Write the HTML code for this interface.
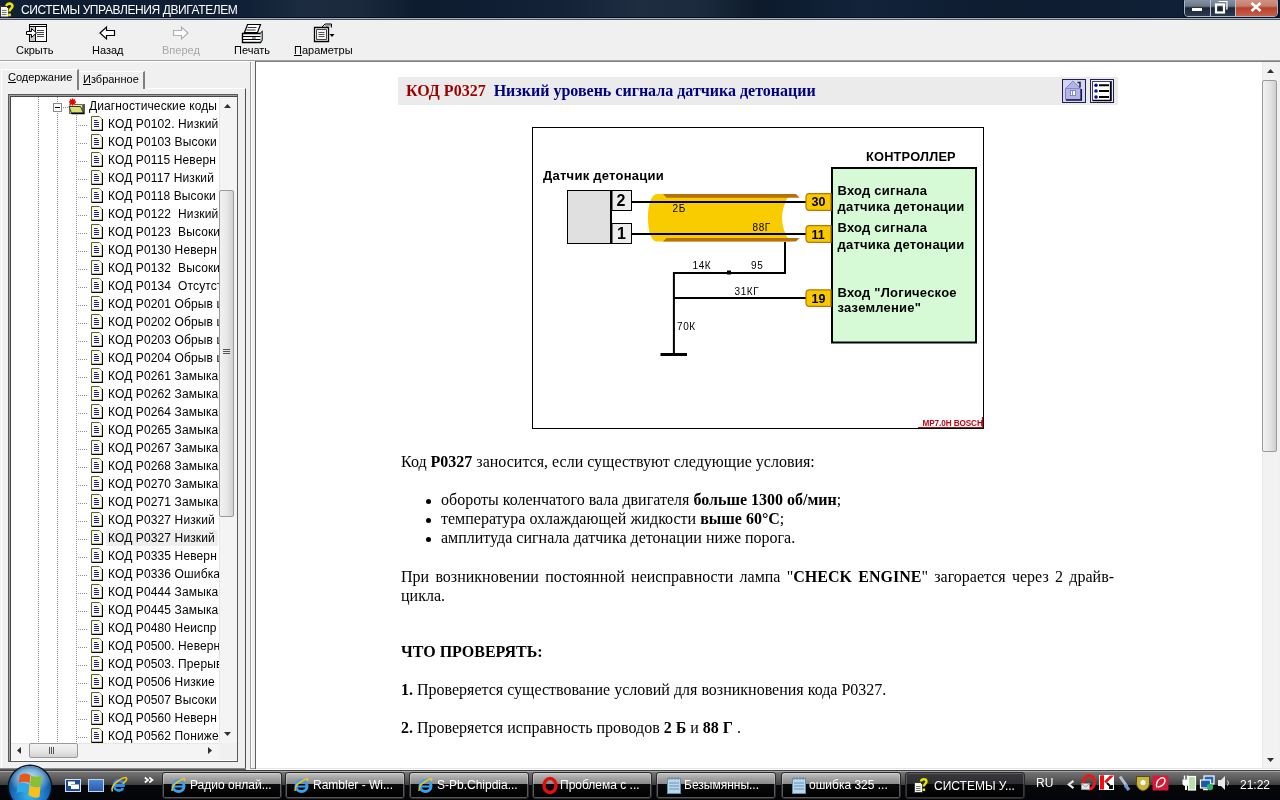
<!DOCTYPE html>
<html><head><meta charset="utf-8">
<style>
*{margin:0;padding:0;box-sizing:border-box}
html,body{width:1280px;height:800px;overflow:hidden;background:#f0f0f0;font-family:"Liberation Sans",sans-serif}
body{will-change:transform}
.a{position:absolute}
svg{position:absolute;overflow:visible}
#title{left:0;top:0;width:1280px;height:17px;background:linear-gradient(90deg,#132238 0px,#0e1c30 60px,#102036 250px,#1c2b3f 300px,#1a293c 360px,#0d1b2f 420px,#132237 560px,#1f2d41 640px,#1c2a3d 700px,#0c1a2c 760px,#12233a 860px,#0e1c30 1000px,#102036 1180px,#0e1c30 1280px)}
#ttext{left:21px;top:2px;color:#fff;font-size:12px;letter-spacing:-0.4px;line-height:17px;white-space:nowrap}
.tb{font-size:11px;color:#000;white-space:nowrap;top:43px;line-height:14px}
.row{position:absolute;left:0;height:18px;width:260px}
.rt{position:absolute;left:108px;top:0;font-size:12px;line-height:18px;white-space:pre;color:#000;letter-spacing:0.12px}
.di{position:absolute;left:91px;top:1px;width:12px;height:15px}
.hd{position:absolute;left:78px;top:10px;width:10px;height:1px;background:repeating-linear-gradient(90deg,#909090 0 1px,transparent 1px 2px)}
.vd{position:absolute;width:1px;background:repeating-linear-gradient(180deg,#909090 0 1px,transparent 1px 2px)}
.body16{font-family:"Liberation Serif",serif;font-size:16px;color:#000;white-space:nowrap;line-height:19px}
.dg{font-family:"Liberation Sans",sans-serif;font-weight:bold;color:#000;white-space:nowrap;position:absolute}
.sm{font-family:"Liberation Sans",sans-serif;color:#000;white-space:nowrap;position:absolute;font-size:10px}
.tbtn{position:absolute;top:772px;width:120px;height:27px;border:1px solid #2a2a2a;border-radius:3px;background:linear-gradient(180deg,#c4c4c4 0px,#a4a4a4 5px,#8a8a8a 11px,#0a0a0a 11.5px,#000 100%);box-shadow:inset 0 0 0 1px rgba(220,220,220,0.4)}
.tbt{position:absolute;left:27px;top:5px;font-size:12px;color:#fff;white-space:nowrap;line-height:15px}
</style></head><body>
<svg width="0" height="0" style="position:absolute">
<defs>
<symbol id="doc" viewBox="0 0 12 15">
<path d="M0.5 0.5H8.5L11.5 3.5V14.5H0.5Z" fill="#fbfbe2"/>
<path d="M0.5 14.5V0.5H8.5" fill="none" stroke="#5a5a44" stroke-width="1"/>
<path d="M8.5 0.5L11.5 3.5" fill="none" stroke="#9a9a80" stroke-width="1"/>
<path d="M11.5 3V14.5H0.5" fill="none" stroke="#000" stroke-width="1.3"/>
<path d="M3 4.5h3.5M3 6.5h5M3 8.5h5M3 10.5h5" stroke="#1a1aa0" stroke-width="1"/>
</symbol>
</defs>
</svg>
<!-- title bar -->
<div class="a" id="title"></div>
<div class="a" style="left:0;top:17px;width:1280px;height:1px;background:#08101c"></div>
<div class="a" style="left:0;top:18px;width:1280px;height:1px;background:#a4acb8"></div>
<div class="a" style="left:0;top:19px;width:1280px;height:1px;background:#4c5462"></div>
<svg style="left:0px;top:1px" width="18" height="17" viewBox="0 0 18 17">
<path d="M0.5 5.5h6l2 2v8.5h-8z" fill="#f4f4ec" stroke="#333" stroke-width="1"/>
<path d="M2 9.5h4.5M2 11.5h4.5M2 13.5h4.5" stroke="#777" stroke-width="1"/>
<path d="M6.5 5c0-3.2 6-3.2 6 0c0 2.6-3 2.4-3 5.5" fill="none" stroke="#e8e400" stroke-width="2.6"/>
<rect x="8.2" y="12.5" width="2.7" height="2.7" fill="#e8e400"/>
</svg>
<div class="a" id="ttext">СИСТЕМЫ УПРАВЛЕНИЯ ДВИГАТЕЛЕМ</div>
<!-- window buttons -->
<div class="a" style="left:1184px;top:-3px;width:94px;height:20px;border:1px solid #aab4c4;border-radius:4px;background:#2a3548;box-shadow:0 0 0 1px #0a1220"></div>
<div class="a" style="left:1185px;top:-2px;width:25px;height:18px;border-radius:3px 0 0 3px;background:linear-gradient(180deg,#8c98a8 0%,#6e7a8c 45%,#1c2638 55%,#2c3a50 100%)"></div>
<div class="a" style="left:1210px;top:-2px;width:1px;height:18px;background:#b8c2d0"></div>
<div class="a" style="left:1211px;top:-2px;width:24px;height:18px;background:linear-gradient(180deg,#8c98a8 0%,#6e7a8c 45%,#1c2638 55%,#2c3a50 100%)"></div>
<div class="a" style="left:1235px;top:-2px;width:1px;height:18px;background:#b8c2d0"></div>
<div class="a" style="left:1236px;top:-2px;width:41px;height:18px;border-radius:0 3px 3px 0;background:linear-gradient(180deg,#d4998c 0%,#c67d6e 45%,#b8402a 55%,#c4604a 100%)"></div>
<div class="a" style="left:1192px;top:8px;width:10px;height:3px;background:#fff;box-shadow:0 0 1px #222"></div>
<svg style="left:1215px;top:1px" width="13" height="12" viewBox="0 0 13 12">
<path d="M3.5 0.5h8.5v8" fill="none" stroke="#fff" stroke-width="1.2"/>
<path d="M11.5 1V8.5" stroke="#c8d0da" stroke-width="1"/>
<rect x="1" y="3.5" width="8" height="8" fill="none" stroke="#fff" stroke-width="2.2"/>
<rect x="3.2" y="5.7" width="3.6" height="3.6" fill="#1c2638"/>
</svg>
<svg style="left:1250px;top:2px" width="12" height="10" viewBox="0 0 12 10">
<path d="M1.5 1L10.5 9M10.5 1L1.5 9" stroke="#fff" stroke-width="2.6"/>
</svg>
<!-- toolbar -->
<svg style="left:26px;top:24px" width="21" height="18" viewBox="0 0 21 18">
<rect x="3.5" y="0.5" width="17" height="17" fill="#fff" stroke="#000"/>
<rect x="4" y="2" width="5" height="15" fill="#c8c8c8"/>
<path d="M3.5 2.5h17M9.5 2.5v15" stroke="#000"/>
<path d="M11 6.5h7M11 8.5h7M11 10.5h7M11 12.5h7" stroke="#444"/>
<path d="M0.5 7.5h5v-3l5 4.5l-5 4.5v-3h-5z" fill="#fff" stroke="#000"/>
</svg>
<svg style="left:99px;top:26px" width="17" height="14" viewBox="0 0 17 14">
<path d="M1 7L7.5 1V4.5H15.5V9.5H7.5V13Z" fill="#fff" stroke="#000" stroke-width="1.2"/>
</svg>
<svg style="left:172px;top:26px" width="17" height="14" viewBox="0 0 17 14">
<path d="M16 7L9.5 1V4.5H1.5V9.5H9.5V13Z" fill="#fff" stroke="#b0b0b0" stroke-width="1.2"/>
</svg>
<svg style="left:241px;top:24px" width="22" height="20" viewBox="0 0 22 20">
<path d="M6.5 0.5H19.5L16.5 8.5H3.5Z" fill="#fff" stroke="#000" stroke-width="1.2"/>
<path d="M6.5 3.5h9M5.5 6h9" stroke="#333" stroke-width="1"/>
<path d="M1.5 9.5H19.5L21 8V16L19.5 18.5H1.5Z" fill="#fff" stroke="#000" stroke-width="1.4"/>
<path d="M1.5 12.5H19.5M1.5 15.5H19.5" stroke="#000" stroke-width="1.2"/>
<path d="M11 14h4" stroke="#555" stroke-width="1.2"/>
<path d="M19.5 9.5L21 8V16L19.5 18.5Z" fill="#9aa"/>
</svg>
<svg style="left:314px;top:23px" width="22" height="20" viewBox="0 0 22 20">
<path d="M7.5 4.5L11 1H17.5V4.5" fill="#ddd" stroke="#000" stroke-width="1"/>
<path d="M11 1.5l2 2l2-2l2 2" fill="none" stroke="#666" stroke-width="1"/>
<path d="M0.5 4.5H14.5V18.5H0.5Z" fill="#fff" stroke="#000" stroke-width="1.3"/>
<path d="M2.5 6.5H12.5V16.5H2.5Z" fill="#f4f4f4" stroke="#444" stroke-width="1"/>
<path d="M4.5 9.5h6M4.5 11.5h6M4.5 13.5h6" stroke="#555" stroke-width="1"/>
<path d="M15.5 11h5l-2.5 3z" fill="#000"/>
</svg>
<div class="a tb" style="left:16px">Скрыть</div>
<div class="a tb" style="left:92px">Назад</div>
<div class="a tb" style="left:162px;color:#a8a8a8">Вперед</div>
<div class="a tb" style="left:234px">Печать</div>
<div class="a tb" style="left:294px"><u>П</u>араметры</div>
<div class="a" style="left:0;top:60px;width:1280px;height:1px;background:#a0a0a0"></div>
<div class="a" style="left:0;top:61px;width:1280px;height:1px;background:#fff"></div>
<div class="a" style="left:246px;top:62px;width:10px;height:708px;background:#f0f0f0"></div>
<div class="a" style="left:250px;top:62px;width:1px;height:706px;background:#a0a0a0"></div>
<div class="a" style="left:251px;top:62px;width:1px;height:706px;background:#fff"></div>
<div class="a" style="left:250px;top:768px;width:6px;height:1px;background:#a0a0a0"></div>
<div class="a" style="left:255px;top:61px;width:1px;height:708px;background:#606060"></div>
<div class="a" style="left:1px;top:88px;width:245px;height:682px;border-left:1px solid #fff;border-top:1px solid #fff;border-right:1px solid #505050;border-bottom:none;background:#f0f0f0"></div>
<div class="a" style="left:0px;top:768px;width:246px;height:1px;background:#8a8a8a"></div>
<div class="a" style="left:0px;top:769px;width:246px;height:1px;background:#5a5a5a"></div>
<div class="a" style="left:78px;top:71px;width:67px;height:18px;border-left:1px solid #fff;border-top:1px solid #fff;border-right:2px solid #808080;background:#f0f0f0"></div>
<div class="a" style="left:83px;top:72px;font-size:11px;line-height:14px;white-space:nowrap"><u>И</u>збранное</div>
<div class="a" style="left:1px;top:69px;width:78px;height:21px;border-left:1px solid #fff;border-top:1px solid #fff;border-right:2px solid #808080;background:#f0f0f0"></div>
<div class="a" style="left:8px;top:70px;font-size:11px;line-height:14px;white-space:nowrap"><u>С</u>одержание</div>
<div class="a" style="left:8px;top:94px;width:230px;height:668px;border:1px solid #5a5a5a;box-shadow:inset 1px 1px 0 #a0a0a0,inset 2px 2px 0 #454545,inset -1px -1px 0 #fff;background:#fff;overflow:hidden">
<div class="a" style="left:-9px;top:-95px;width:260px;height:800px">
<div class="vd" style="left:38px;top:97px;height:646px"></div>
<div class="vd" style="left:57px;top:97px;height:6px"></div>
<div class="vd" style="left:57px;top:113px;height:630px"></div>
<div class="vd" style="left:76px;top:115px;height:628px"></div>
<div class="a" style="left:53px;top:103px;width:9px;height:9px;border:1px solid #8a8a8a;background:#fff"></div>
<div class="a" style="left:55px;top:107px;width:5px;height:1px;background:#000"></div>
<div class="a" style="left:63px;top:107px;width:5px;height:1px;background:repeating-linear-gradient(90deg,#909090 0 1px,transparent 1px 2px)"></div>
<svg style="left:68px;top:98px" width="17" height="16" viewBox="0 0 17 16">
<path d="M2 5.5h4l1 1h7.5v9h-13z" fill="#f0e8b0" stroke="#6a6a40"/>
<path d="M1 8.5h11.5l3 6.5h-12z" fill="#d8e070" stroke="#333"/>
<path d="M3.5 15.5h12.5V6" fill="none" stroke="#000" stroke-width="1.3"/>
<path d="M4.5 0.5L4.5 7.5M1 4h7M2 1.5l5 5M7 1.5l-5 5" stroke="#e00000" stroke-width="1.6"/>
</svg>
<div class="rt" style="left:89px;top:97px">Диагностические коды</div>
<div class="row" style="top:115px">
<div class="hd"></div>
<svg class="di" viewBox="0 0 12 15"><use href="#doc"/></svg>
<div class="rt">КОД P0102. Низкий</div>
</div>
<div class="row" style="top:133px">
<div class="hd"></div>
<svg class="di" viewBox="0 0 12 15"><use href="#doc"/></svg>
<div class="rt">КОД P0103 Высоки</div>
</div>
<div class="row" style="top:151px">
<div class="hd"></div>
<svg class="di" viewBox="0 0 12 15"><use href="#doc"/></svg>
<div class="rt">КОД P0115 Неверн</div>
</div>
<div class="row" style="top:169px">
<div class="hd"></div>
<svg class="di" viewBox="0 0 12 15"><use href="#doc"/></svg>
<div class="rt">КОД P0117 Низкий</div>
</div>
<div class="row" style="top:187px">
<div class="hd"></div>
<svg class="di" viewBox="0 0 12 15"><use href="#doc"/></svg>
<div class="rt">КОД P0118 Высоки</div>
</div>
<div class="row" style="top:205px">
<div class="hd"></div>
<svg class="di" viewBox="0 0 12 15"><use href="#doc"/></svg>
<div class="rt">КОД P0122  Низкий</div>
</div>
<div class="row" style="top:223px">
<div class="hd"></div>
<svg class="di" viewBox="0 0 12 15"><use href="#doc"/></svg>
<div class="rt">КОД P0123  Высоки</div>
</div>
<div class="row" style="top:241px">
<div class="hd"></div>
<svg class="di" viewBox="0 0 12 15"><use href="#doc"/></svg>
<div class="rt">КОД P0130 Неверн</div>
</div>
<div class="row" style="top:259px">
<div class="hd"></div>
<svg class="di" viewBox="0 0 12 15"><use href="#doc"/></svg>
<div class="rt">КОД P0132  Высоки</div>
</div>
<div class="row" style="top:277px">
<div class="hd"></div>
<svg class="di" viewBox="0 0 12 15"><use href="#doc"/></svg>
<div class="rt">КОД P0134  Отсутст</div>
</div>
<div class="row" style="top:295px">
<div class="hd"></div>
<svg class="di" viewBox="0 0 12 15"><use href="#doc"/></svg>
<div class="rt">КОД P0201 Обрыв ц</div>
</div>
<div class="row" style="top:313px">
<div class="hd"></div>
<svg class="di" viewBox="0 0 12 15"><use href="#doc"/></svg>
<div class="rt">КОД P0202 Обрыв ц</div>
</div>
<div class="row" style="top:331px">
<div class="hd"></div>
<svg class="di" viewBox="0 0 12 15"><use href="#doc"/></svg>
<div class="rt">КОД P0203 Обрыв ц</div>
</div>
<div class="row" style="top:349px">
<div class="hd"></div>
<svg class="di" viewBox="0 0 12 15"><use href="#doc"/></svg>
<div class="rt">КОД P0204 Обрыв ц</div>
</div>
<div class="row" style="top:367px">
<div class="hd"></div>
<svg class="di" viewBox="0 0 12 15"><use href="#doc"/></svg>
<div class="rt">КОД P0261 Замыка</div>
</div>
<div class="row" style="top:385px">
<div class="hd"></div>
<svg class="di" viewBox="0 0 12 15"><use href="#doc"/></svg>
<div class="rt">КОД P0262 Замыка</div>
</div>
<div class="row" style="top:403px">
<div class="hd"></div>
<svg class="di" viewBox="0 0 12 15"><use href="#doc"/></svg>
<div class="rt">КОД P0264 Замыка</div>
</div>
<div class="row" style="top:421px">
<div class="hd"></div>
<svg class="di" viewBox="0 0 12 15"><use href="#doc"/></svg>
<div class="rt">КОД P0265 Замыка</div>
</div>
<div class="row" style="top:439px">
<div class="hd"></div>
<svg class="di" viewBox="0 0 12 15"><use href="#doc"/></svg>
<div class="rt">КОД P0267 Замыка</div>
</div>
<div class="row" style="top:457px">
<div class="hd"></div>
<svg class="di" viewBox="0 0 12 15"><use href="#doc"/></svg>
<div class="rt">КОД P0268 Замыка</div>
</div>
<div class="row" style="top:475px">
<div class="hd"></div>
<svg class="di" viewBox="0 0 12 15"><use href="#doc"/></svg>
<div class="rt">КОД P0270 Замыка</div>
</div>
<div class="row" style="top:493px">
<div class="hd"></div>
<svg class="di" viewBox="0 0 12 15"><use href="#doc"/></svg>
<div class="rt">КОД P0271 Замыка</div>
</div>
<div class="row" style="top:511px">
<div class="hd"></div>
<svg class="di" viewBox="0 0 12 15"><use href="#doc"/></svg>
<div class="rt">КОД P0327 Низкий</div>
</div>
<div class="row" style="top:529px">
<div class="a" style="left:106px;top:1px;width:112px;height:16px;background:#efefef"></div>
<div class="hd"></div>
<svg class="di" viewBox="0 0 12 15"><use href="#doc"/></svg>
<div class="rt">КОД P0327 Низкий</div>
</div>
<div class="row" style="top:547px">
<div class="hd"></div>
<svg class="di" viewBox="0 0 12 15"><use href="#doc"/></svg>
<div class="rt">КОД P0335 Неверн</div>
</div>
<div class="row" style="top:565px">
<div class="hd"></div>
<svg class="di" viewBox="0 0 12 15"><use href="#doc"/></svg>
<div class="rt">КОД P0336 Ошибка</div>
</div>
<div class="row" style="top:583px">
<div class="hd"></div>
<svg class="di" viewBox="0 0 12 15"><use href="#doc"/></svg>
<div class="rt">КОД P0444 Замыка</div>
</div>
<div class="row" style="top:601px">
<div class="hd"></div>
<svg class="di" viewBox="0 0 12 15"><use href="#doc"/></svg>
<div class="rt">КОД P0445 Замыка</div>
</div>
<div class="row" style="top:619px">
<div class="hd"></div>
<svg class="di" viewBox="0 0 12 15"><use href="#doc"/></svg>
<div class="rt">КОД P0480 Неиспр</div>
</div>
<div class="row" style="top:637px">
<div class="hd"></div>
<svg class="di" viewBox="0 0 12 15"><use href="#doc"/></svg>
<div class="rt">КОД P0500. Неверн</div>
</div>
<div class="row" style="top:655px">
<div class="hd"></div>
<svg class="di" viewBox="0 0 12 15"><use href="#doc"/></svg>
<div class="rt">КОД P0503. Прерыв</div>
</div>
<div class="row" style="top:673px">
<div class="hd"></div>
<svg class="di" viewBox="0 0 12 15"><use href="#doc"/></svg>
<div class="rt">КОД P0506 Низкие</div>
</div>
<div class="row" style="top:691px">
<div class="hd"></div>
<svg class="di" viewBox="0 0 12 15"><use href="#doc"/></svg>
<div class="rt">КОД P0507 Высоки</div>
</div>
<div class="row" style="top:709px">
<div class="hd"></div>
<svg class="di" viewBox="0 0 12 15"><use href="#doc"/></svg>
<div class="rt">КОД P0560 Неверн</div>
</div>
<div class="row" style="top:727px">
<div class="hd"></div>
<svg class="di" viewBox="0 0 12 15"><use href="#doc"/></svg>
<div class="rt">КОД P0562 Пониже</div>
</div>
</div>
<div class="a" style="left:210px;top:2px;width:18px;height:646px;background:#f4f4f4;border-left:1px solid #e6e6e6"></div>
</div>
<svg style="left:224px;top:104px" width="7" height="4" viewBox="0 0 7 4"><path d="M0 4L3.5 0L7 4z" fill="#303030"/></svg>
<div class="a" style="left:219px;top:190px;width:15px;height:327px;border:1px solid #9a9a9a;border-radius:2px;background:linear-gradient(90deg,#f2f2f2 0%,#e8e8e8 50%,#d2d2d2 100%)"></div>
<div class="a" style="left:223px;top:349px;width:7px;height:1px;background:#555;box-shadow:0 2px 0 #555,0 4px 0 #555"></div>
<svg style="left:224px;top:732px" width="7" height="4" viewBox="0 0 7 4"><path d="M0 0L3.5 4L7 0z" fill="#303030"/></svg>
<div class="a" style="left:11px;top:743px;width:226px;height:17px;background:#f4f4f4;border-top:1px solid #e6e6e6"></div>
<svg style="left:17px;top:747px" width="4" height="7" viewBox="0 0 4 7"><path d="M4 0L0 3.5L4 7z" fill="#303030"/></svg>
<svg style="left:208px;top:747px" width="4" height="7" viewBox="0 0 4 7"><path d="M0 0L4 3.5L0 7z" fill="#303030"/></svg>
<div class="a" style="left:29px;top:743px;width:49px;height:15px;border:1px solid #9a9a9a;border-radius:2px;background:linear-gradient(180deg,#f2f2f2 0%,#e8e8e8 50%,#d2d2d2 100%)"></div>
<div class="a" style="left:49px;top:747px;width:1px;height:7px;background:#555;box-shadow:2px 0 0 #555,4px 0 0 #555"></div>
<div class="a" style="left:219px;top:743px;width:18px;height:17px;background:#f0f0f0"></div><!-- content area -->
<div class="a" style="left:256px;top:61px;width:1024px;height:1px;background:#808080"></div>
<div class="a" style="left:256px;top:62px;width:1024px;height:706px;background:#fff"></div>
<!-- scrollbar -->
<div class="a" style="left:1262px;top:62px;width:17px;height:706px;background:#f2f2f2;border-left:1px solid #e8e8e8"></div>
<svg style="left:1267px;top:69px" width="7" height="4" viewBox="0 0 7 4"><path d="M0 4L3.5 0L7 4z" fill="#303030"/></svg>
<div class="a" style="left:1262px;top:80px;width:15px;height:372px;border:1px solid #9a9a9a;border-radius:2px;background:linear-gradient(90deg,#f2f2f2 0%,#e6e6e6 50%,#cfcfcf 100%)"></div>
<svg style="left:1267px;top:758px" width="7" height="4" viewBox="0 0 7 4"><path d="M0 0L3.5 4L7 0z" fill="#303030"/></svg>
<div class="a" style="left:256px;top:768px;width:1024px;height:1px;background:#e4e4e6"></div><div class="a" style="left:256px;top:769px;width:1024px;height:1px;background:#fff"></div>
<div class="a" style="left:1279px;top:62px;width:1px;height:707px;background:#f0f0f0"></div>
<!-- header bar -->
<div class="a" style="left:398px;top:77px;width:720px;height:28px;background:#ebebeb"></div>
<div class="a" style="left:406px;top:81px;font-family:'Liberation Serif',serif;font-weight:bold;font-size:16px;line-height:19px;white-space:nowrap"><span style="color:#9c0000">КОД P0327</span>&nbsp; <span style="color:#000080">Низкий уровень сигнала датчика детонации</span></div>
<svg style="left:1062px;top:79px" width="24" height="24" viewBox="0 0 24 24">
<rect x="0.5" y="0.5" width="23" height="23" fill="#d4d4f4" stroke="#202050"/>
<path d="M3.5 9.5L10.8 2.2L18.5 9.5V20.5H3.5Z" fill="#b4b4ea" stroke="#8080b8"/>
<path d="M3.5 9.5H18.5" stroke="#8a8ac0"/>
<path d="M15.5 3.5h2.5v5" fill="none" stroke="#202040" stroke-width="1.5"/>
<path d="M4 21h15.3V10" fill="none" stroke="#14143a" stroke-width="1.5"/>
<rect x="8.5" y="11.5" width="5" height="5" fill="#fff" stroke="#8888b8"/>
<path d="M10.5 12v4" stroke="#9090c0"/>
</svg>
<svg style="left:1090px;top:79px" width="24" height="24" viewBox="0 0 24 24">
<rect x="0.5" y="0.5" width="23" height="23" fill="#eeeefa" stroke="#202050"/>
<rect x="2.5" y="2.5" width="19" height="19" fill="#fff" stroke="#404060"/>
<path d="M20.5 3v18.5H3" fill="none" stroke="#000" stroke-width="1.3"/>
<circle cx="6" cy="6.2" r="1.8" fill="#10108a"/><circle cx="6" cy="12" r="1.8" fill="#10108a"/><circle cx="6" cy="18" r="1.8" fill="#10108a"/>
<path d="M9 6.2h10M9 12h10M9 18h10" stroke="#000" stroke-width="2"/>
</svg>
<svg style="left:0;top:0" width="1280" height="800" viewBox="0 0 1280 800">
<rect x="532.5" y="127.5" width="451" height="301" fill="#fff" stroke="#000" stroke-width="1"/>
<g font-family="Liberation Sans" font-weight="bold" fill="#000">
<text x="543" y="180" font-size="13" letter-spacing="0.25">Датчик детонации</text>
<text x="866" y="161" font-size="12.8" letter-spacing="0.2">КОНТРОЛЛЕР</text>
</g>
<!-- sensor -->
<rect x="567.5" y="190.5" width="43" height="53" fill="#e0e0e0" stroke="#000" stroke-width="1"/>
<path d="M611 190v54" stroke="#000" stroke-width="2"/>
<rect x="612" y="190.5" width="19.5" height="20" fill="#ececec" stroke="#000" stroke-width="1"/>
<rect x="612" y="223.5" width="19.5" height="20" fill="#ececec" stroke="#000" stroke-width="1"/>
<text x="616.5" y="206" font-family="Liberation Sans" font-weight="bold" font-size="16">2</text>
<text x="617" y="239" font-family="Liberation Sans" font-weight="bold" font-size="16">1</text>
<!-- cable -->
<path d="M657 194H790Q774 218 790 241.6H657C651 241.6 648 230 648 218C648 206 651 194 657 194Z" fill="#f9cc00"/>
<path d="M663 194H796L799.5 197.8H666.5Z" fill="#b8700c"/>
<path d="M666.5 237.9H799.5L796 241.6H663Z" fill="#b8700c"/>
<!-- wires -->
<path d="M632 202H806M632 234H806" stroke="#000" stroke-width="2.2"/>
<path d="M785 242V273H673.9V355" fill="none" stroke="#000" stroke-width="2"/>
<path d="M674 298H806" stroke="#000" stroke-width="2"/>
<rect x="727" y="270.5" width="4" height="4" fill="#000"/>
<path d="M660.5 354.5H687" stroke="#000" stroke-width="3"/>
<g font-family="Liberation Sans" font-size="10" fill="#000" letter-spacing="0.6">
<text x="672.5" y="212">2Б</text>
<text x="752.5" y="230.8">88Г</text>
<text x="692.5" y="268.8">14К</text>
<text x="751" y="268.8">95</text>
<text x="734.5" y="294.5">31КГ</text>
<text x="677" y="329.6">70К</text>
</g>
<!-- controller -->
<rect x="832" y="168" width="144" height="174.5" fill="#d6fad6" stroke="#000" stroke-width="2"/>
<g font-family="Liberation Sans" font-weight="bold" font-size="13" fill="#000" letter-spacing="0.22">
<text x="837.5" y="194.8">Вход сигнала</text>
<text x="837.5" y="210.5">датчика детонации</text>
<text x="837.5" y="232.3">Вход сигнала</text>
<text x="837.5" y="248.8">датчика детонации</text>
<text x="837.5" y="296.7">Вход "Логическое</text>
<text x="837.5" y="311.8">заземление"</text>
</g>
<!-- connectors -->
<g fill="#f8c800" stroke="#b87800" stroke-width="1.2">
<path d="M831 193.6H809.5Q806 193.6 806 197V207Q806 210.4 809.5 210.4H831Z"/>
<path d="M831 225.6H809.5Q806 225.6 806 229V239Q806 242.4 809.5 242.4H831Z"/>
<path d="M831 289.8H809.5Q806 289.8 806 293.2V303Q806 306.4 809.5 306.4H831Z"/>
</g>
<g font-family="Liberation Sans" font-weight="bold" font-size="12.5" fill="#000">
<text x="811.5" y="205.5">30</text>
<text x="811.5" y="239">11</text>
<text x="811.5" y="303">19</text>
</g>
<!-- bosch label -->
<text x="922.5" y="425.8" font-family="Liberation Sans" font-weight="bold" font-size="8.2" fill="#b80818" letter-spacing="-0.1">MP7.0H BOSCH</text>
<path d="M918 427.5H983M982.5 417V428" stroke="#b80818" stroke-width="1.2"/>
</svg>
<div class="a body16" style="left:401px;top:452px">Код <b>P0327</b> заносится, если существуют следующие условия:</div>
<div class="a" style="left:426px;top:499px;width:5px;height:5px;border-radius:50%;background:#000"></div>
<div class="a body16" style="left:441px;top:490px">обороты коленчатого вала двигателя <b>больше 1300 об/мин</b>;</div>
<div class="a" style="left:426px;top:518px;width:5px;height:5px;border-radius:50%;background:#000"></div>
<div class="a body16" style="left:441px;top:509px">температура охлаждающей жидкости <b>выше 60°С</b>;</div>
<div class="a" style="left:426px;top:537px;width:5px;height:5px;border-radius:50%;background:#000"></div>
<div class="a body16" style="left:441px;top:528px">амплитуда сигнала датчика детонации ниже порога.</div>
<div class="a body16" style="left:401px;top:567px;width:713px;text-align:justify;text-align-last:justify">При возникновении постоянной неисправности лампа "<b>CHECK ENGINE</b>" загорается через 2 драйв-</div>
<div class="a body16" style="left:401px;top:586px">цикла.</div>
<div class="a body16" style="left:401px;top:642px"><b>ЧТО ПРОВЕРЯТЬ:</b></div>
<div class="a body16" style="left:401px;top:680px"><b>1.</b> Проверяется существование условий для возникновения кода P0327.</div>
<div class="a body16" style="left:401px;top:718px"><b>2.</b> Проверяется исправность проводов <b>2 Б</b> и <b>88 Г</b> .</div>
<!-- taskbar -->
<div class="a" style="left:0;top:770px;width:1280px;height:30px;background:linear-gradient(180deg,#404040 0px,#404040 1px,#a4a4a4 1px,#a4a4a4 2px,#747474 2px,#5a5a5a 9px,#3e3e3e 15px,#05070a 15px,#03050a 30px)"></div>
<!-- start orb -->
<div class="a" style="left:9px;top:766px;width:42px;height:42px;border-radius:50%;background:radial-gradient(ellipse 70% 50% at 50% 28%,#c8e4f4 0%,#78b0d8 40%,transparent 75%),radial-gradient(circle at 50% 70%,#38b8f0 0%,#1a70c0 45%,#0c3a78 80%,#06203e 100%);box-shadow:0 0 0 1.5px #0a121c"></div>
<svg style="left:15px;top:772px" width="28" height="27" viewBox="0 0 28 27">
<path d="M5 3Q10 0 15.5 3L14.5 11Q9 8.5 3.5 11Z" fill="#e8581c"/>
<path d="M16 3.5Q21.5 6 27 3.5L25.5 14Q20.5 16 15 13Z" fill="#88c030"/>
<path d="M3 12Q8.5 9.5 14 12.5L13 21Q7.5 18.5 1.5 21Z" fill="#30a8e8"/>
<path d="M14.5 13.5Q20 16.5 25.5 14.5L24.5 25Q19 27 13.5 23Z" fill="#f8c018"/>
</svg>
<!-- quick launch -->
<div class="a" style="left:65px;top:779px;width:16px;height:13px;background:#1a4a9a;border:1px solid #d8e0f0"></div>
<div class="a" style="left:68px;top:781px;width:7px;height:5px;background:#fff;border-top:1px solid #9ab"></div>
<div class="a" style="left:71px;top:784px;width:8px;height:5px;background:#fff;border-top:1px solid #9ab"></div>
<div class="a" style="left:88px;top:779px;width:16px;height:13px;background:linear-gradient(180deg,#4a88d8,#2a5aa8);border:1px solid #c8d4e4"></div>
<svg style="left:110px;top:776px" width="18" height="17" viewBox="0 0 18 17">
<path d="M4 9.5h9.5c0-3-2-5-4.8-5S4 6.5 4 9.5c0 3 2 5 4.8 5c2 0 3.5-1 4.2-2.5" fill="none" stroke="#2a90e8" stroke-width="2.8"/>
<path d="M2.5 15.5Q0 11 8 5Q15 0.5 16.5 2Q17.5 4 13 7.5" fill="none" stroke="#e8c020" stroke-width="1.6"/>
</svg>
<svg style="left:144px;top:777px" width="10" height="6" viewBox="0 0 10 6"><path d="M0.8 0.5L4 3L0.8 5.5M5.3 0.5L8.5 3L5.3 5.5" fill="none" stroke="#fff" stroke-width="1.6"/></svg>
<div class="tbtn" style="left:162px"></div>
<svg style="left:170px;top:777px" width="17" height="17" viewBox="0 0 17 17"><circle cx="8.5" cy="9" r="5.5" fill="none" stroke="#3aa0f0" stroke-width="3"/><path d="M4 9.5h9" stroke="#3aa0f0" stroke-width="2"/><path d="M2 14Q1 7 13 2Q16 1 14 4" fill="none" stroke="#f0c020" stroke-width="1.5"/></svg>
<div class="tbt" style="left:190px;top:778px;position:absolute">Радио онлай...</div>
<div class="tbtn" style="left:285px"></div>
<svg style="left:293px;top:777px" width="17" height="17" viewBox="0 0 17 17"><circle cx="8.5" cy="9" r="5.5" fill="none" stroke="#3aa0f0" stroke-width="3"/><path d="M4 9.5h9" stroke="#3aa0f0" stroke-width="2"/><path d="M2 14Q1 7 13 2Q16 1 14 4" fill="none" stroke="#f0c020" stroke-width="1.5"/></svg>
<div class="tbt" style="left:313px;top:778px;position:absolute">Rambler - Wi...</div>
<div class="tbtn" style="left:409px"></div>
<svg style="left:417px;top:777px" width="17" height="17" viewBox="0 0 17 17"><circle cx="8.5" cy="9" r="5.5" fill="none" stroke="#3aa0f0" stroke-width="3"/><path d="M4 9.5h9" stroke="#3aa0f0" stroke-width="2"/><path d="M2 14Q1 7 13 2Q16 1 14 4" fill="none" stroke="#f0c020" stroke-width="1.5"/></svg>
<div class="tbt" style="left:437px;top:778px;position:absolute">S-Pb.Chipdia...</div>
<div class="tbtn" style="left:532px"></div>
<svg style="left:542px;top:777px" width="16" height="17" viewBox="0 0 16 17"><ellipse cx="8" cy="8.5" rx="6" ry="7" fill="none" stroke="#e01010" stroke-width="3.5"/></svg>
<div class="tbt" style="left:560px;top:778px;position:absolute">Проблема с ...</div>
<div class="tbtn" style="left:656px"></div>
<svg style="left:666px;top:776px" width="16" height="18" viewBox="0 0 16 18"><rect x="1.5" y="2.5" width="13" height="15" fill="#b8d8f0" stroke="#6090b0"/><path d="M3 1v3M6 1v3M9 1v3M12 1v3" stroke="#888"/><path d="M3 7h10M3 10h10M3 13h10" stroke="#7090a8"/></svg>
<div class="tbt" style="left:684px;top:778px;position:absolute">Безымянны...</div>
<div class="tbtn" style="left:781px"></div>
<svg style="left:791px;top:776px" width="16" height="18" viewBox="0 0 16 18"><rect x="1.5" y="2.5" width="13" height="15" fill="#b8d8f0" stroke="#6090b0"/><path d="M3 1v3M6 1v3M9 1v3M12 1v3" stroke="#888"/><path d="M3 7h10M3 10h10M3 13h10" stroke="#7090a8"/></svg>
<div class="tbt" style="left:809px;top:778px;position:absolute">ошибка 325 ...</div>
<div class="tbtn" style="left:905px;background:linear-gradient(180deg,#3a3a3e 0px,#2c2c30 11px,#08080a 11.5px,#000 100%);box-shadow:inset 0 0 0 1px rgba(160,160,160,0.35)"></div>
<svg style="left:914px;top:777px" width="16" height="16" viewBox="0 0 16 16">
<path d="M0.5 5.5h6l2 2v8h-8z" fill="#f4f4ec" stroke="#333" stroke-width="1"/>
<path d="M2 9.5h4.5M2 11.5h4.5M2 13.5h4.5" stroke="#777" stroke-width="1"/>
<path d="M7 4.5c0-3 5.5-3 5.5 0c0 2.4-2.7 2.2-2.7 5" fill="none" stroke="#e8e400" stroke-width="2.4"/>
<rect x="8.6" y="11.5" width="2.5" height="2.5" fill="#e8e400"/>
</svg>
<div class="tbt" style="left:934px;top:779px;position:absolute">СИСТЕМЫ У...</div>
<div class="a" style="left:1036px;top:776px;color:#fff;font-size:12px;line-height:15px">RU</div>
<svg style="left:1067px;top:780px" width="8" height="9" viewBox="0 0 8 9"><path d="M6.5 0.8L1.8 4.5L6.5 8.2" fill="none" stroke="#e8e8e8" stroke-width="2.2"/></svg>
<svg style="left:1080px;top:774px" width="90" height="18" viewBox="0 0 90 18">
<ellipse cx="9" cy="8.3" rx="5.6" ry="6.6" fill="none" stroke="#e81818" stroke-width="3.2"/>
<rect x="1.5" y="9.5" width="8" height="6" fill="#e8e8e8" stroke="#999" stroke-width="0.8"/><path d="M2 10l3.5 3l3.5-3" fill="none" stroke="#888" stroke-width="0.8"/>
<rect x="19" y="1" width="15" height="15" fill="#fff"/>
<path d="M20 1.5h4v6l6-6h4l-8 8z" fill="#ee1010"/><path d="M20 1.5h4v14h-4z" fill="#ee1010"/>
<path d="M27 9l5 5M29 14h3v-3" fill="none" stroke="#000" stroke-width="1.8"/>
<path d="M40 2.5l7 10" stroke="#b8c0cc" stroke-width="3"/><path d="M45 11l4 5" stroke="#6a9ad0" stroke-width="3.5"/>
<path d="M56.5 2.5h13v7q0 5.5-6.5 7.5q-6.5-2-6.5-7.5z" fill="#c8b440" stroke="#5a4a10" stroke-width="1"/><circle cx="63" cy="8.5" r="2.6" fill="#fff"/>
<rect x="72.5" y="1.5" width="16" height="15" rx="1.5" fill="#d81838"/><path d="M77 13.5q-2-6 4-9.5q4-1 4 3q-1 5-7 6" fill="none" stroke="#fff" stroke-width="1.4"/>
</svg>
<svg style="left:1182px;top:775px" width="50" height="16" viewBox="0 0 50 16">
<path d="M2.5 0.5v4M5.5 0.5v4" stroke="#fff" stroke-width="1.4"/><path d="M0.5 4.5h7v4q0 2-3.5 2.5q-3.5-.5-3.5-2.5z" fill="#fff"/><path d="M4 11v4" stroke="#fff" stroke-width="2"/>
<rect x="6.5" y="1.5" width="7" height="13.5" fill="#b8e0a8" stroke="#fff" stroke-width="1.2"/>
<rect x="22" y="1" width="10" height="8" fill="#2466c0" stroke="#fff" stroke-width="1.2"/><rect x="18.5" y="5" width="10" height="8" fill="#1a58b0" stroke="#fff" stroke-width="1.2"/><path d="M21 14.5h5" stroke="#fff" stroke-width="1.5"/><circle cx="28" cy="12" r="3.2" fill="#30b060"/>
<path d="M36 5h3l4-4v14l-4-4h-3z" fill="#e8e8e8"/><path d="M45.5 5.5q1.8 2.5 0 5" fill="none" stroke="#ddd" stroke-width="1"/>
</svg>
<div class="a" style="left:1240px;top:778px;color:#fff;font-size:12px;line-height:15px">21:22</div></body></html>
